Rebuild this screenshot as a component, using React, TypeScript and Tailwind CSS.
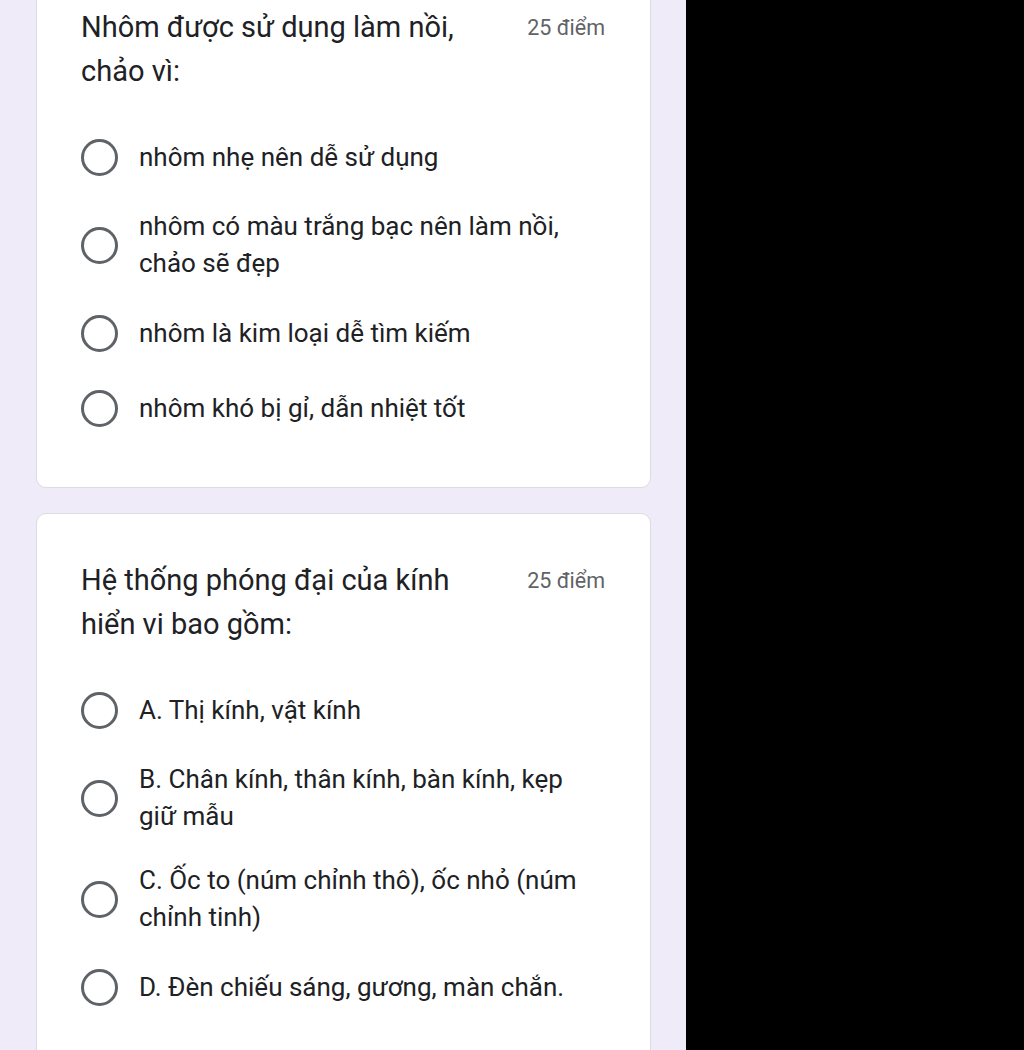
const questions = [
  {
    title: 'Nhôm được sử dụng làm nồi, chảo vì:',
    points: '25 điểm',
    options: [
      'nhôm nhẹ nên dễ sử dụng',
      'nhôm có màu trắng bạc nên làm nồi, chảo sẽ đẹp',
      'nhôm là kim loại dễ tìm kiếm',
      'nhôm khó bị gỉ, dẫn nhiệt tốt',
    ],
  },
  {
    title: 'Hệ thống phóng đại của kính hiển vi bao gồm:',
    points: '25 điểm',
    options: [
      'A. Thị kính, vật kính',
      'B. Chân kính, thân kính, bàn kính, kẹp giữ mẫu',
      'C. Ốc to (núm chỉnh thô), ốc nhỏ (núm chỉnh tinh)',
      'D. Đèn chiếu sáng, gương, màn chắn.',
    ],
  },
];

const Radio = () => (
  <div className="h-[37px] w-[37px] shrink-0 rounded-full border-[3.5px] border-[#5f6368]" />
);

const App = () => {
  return (
    <div className="flex h-[1050px] w-[1024px] overflow-hidden font-['Roboto','Noto_Sans',sans-serif]">
      {/* form column */}
      <div className="w-[686px] shrink-0 bg-[#f0ebf8] px-[36px]">
        <div className="mt-[-40px] flex w-[615px] flex-col gap-[25px]">
          {questions.map((q, i) => (
            <div
              key={i}
              className="rounded-[10px] border border-[#dadce0] bg-white pb-[55px] pl-[44px] pr-[45px] pt-[44px]"
            >
              <div className="flex items-start justify-between gap-[24px]">
                <h2 className="w-[420px] text-[29px] leading-[44px] text-[#202124]">{q.title}</h2>
                <span className="pt-[4px] text-[21.5px] leading-[38px] whitespace-nowrap text-[#5f6368]">{q.points}</span>
              </div>
              <div className="mt-[40px] flex flex-col gap-[27px]">
                {q.options.map((o, j) => (
                  <label key={j} className="flex min-h-[48px] items-center gap-[21px]">
                    <Radio />
                    <span className="text-[26px] leading-[37px] text-[#202124]">{o}</span>
                  </label>
                ))}
              </div>
            </div>
          ))}
        </div>
      </div>
      {/* black area */}
      <div className="flex-1 bg-black" />
    </div>
  );
};

export default App;
